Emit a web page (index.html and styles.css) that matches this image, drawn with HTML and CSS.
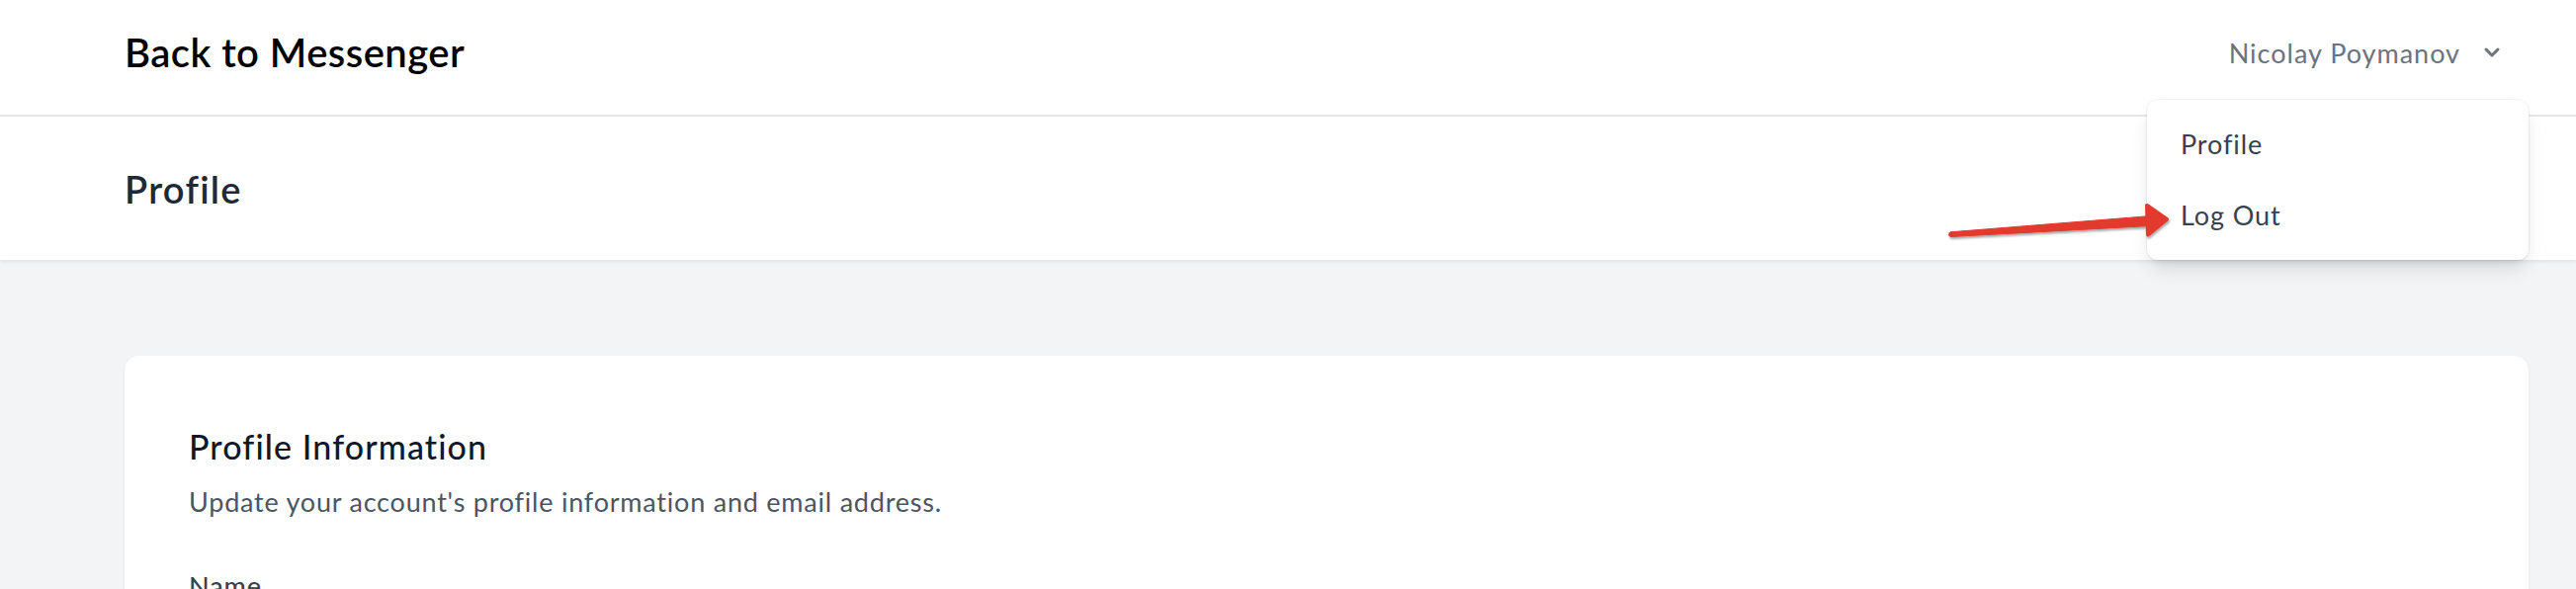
FILE: index.html
```html
<!DOCTYPE html>
<html lang="en">
<head>
<meta charset="utf-8">
<title>Profile</title>
<link rel="stylesheet" href="styles.css">
</head>
<body>
<nav class="nav">
  <div class="nav-inner">
    <a class="brand" href="#">Back to Messenger</a>
    <button class="user-btn" type="button">
      <span>Nicolay Poymanov</span>
      <svg class="chev" viewBox="0 0 20 20" fill="currentColor"><path fill-rule="evenodd" d="M5.293 7.293a1 1 0 011.414 0L10 10.586l3.293-3.293a1 1 0 111.414 1.414l-4 4a1 1 0 01-1.414 0l-4-4a1 1 0 010-1.414z" clip-rule="evenodd"/></svg>
    </button>
    <div class="dropdown">
      <a href="#">Profile</a>
      <a href="#">Log Out</a>
    </div>
  </div>
</nav>
<header class="header">
  <h1>Profile</h1>
</header>
<main class="main">
  <section class="card">
    <h2>Profile Information</h2>
    <p>Update your account's profile information and email address.</p>
    <div class="label">Name</div>
  </section>
</main>
<svg class="arrow" viewBox="1960 195 250 60" width="250" height="60">
  <defs>
    <filter id="sh" x="-10%" y="-30%" width="120%" height="160%">
      <feDropShadow dx="1" dy="2" stdDeviation="1" flood-color="#000" flood-opacity="0.35"/>
    </filter>
  </defs>
  <g filter="url(#sh)" fill="#e23a2f" stroke="#e23a2f" stroke-linejoin="round">
    <path d="M1973 234.8 L2176 218.5 L2176 228.5 L1973 239.6 Z" stroke-width="1"/>
    <circle cx="1973.5" cy="237.2" r="2.4" stroke="none"/>
    <path d="M2172 208 L2192 222 L2173 237.5 Z" stroke-width="4"/>
  </g>
</svg>
</body>
</html>
```
FILE: styles.css
```css
* { box-sizing: border-box; }
html, body { margin: 0; padding: 0; overflow: hidden; }
body {
  background: #f3f4f6;
  font-family: "Lato", "Liberation Sans", sans-serif;
  height: 596px;
  position: relative;
}
.nav {
  background: #fff;
  border-bottom: 2px solid #e5e7eb;
}
.nav-inner {
  position: relative;
  height: 116px;
  padding: 0 48px 10px 126px;
  display: flex;
  align-items: center;
  justify-content: space-between;
}
.brand {
  font-size: 40px;
  font-weight: 600;
  letter-spacing: 0.45px;
  color: #000;
  text-decoration: none;
}
.user-btn {
  display: flex;
  align-items: center;
  background: none;
  border: 0;
  padding: 0 22px 0 0;
  font-family: inherit;
  font-size: 27px;
  letter-spacing: 1px;
  color: #6b7280;
}
.chev {
  width: 30px;
  height: 30px;
  margin-left: 17px;
}
.dropdown {
  position: absolute;
  top: 101px;
  right: 48px;
  width: 386px;
  padding: 9px 0;
  background: #fff;
  border-radius: 11px;
  box-shadow: 0 0 0 1px rgba(0,0,0,0.05), 0 12px 20px -4px rgba(0,0,0,0.12), 0 6px 10px -6px rgba(0,0,0,0.1);
  z-index: 5;
}
.dropdown a {
  display: block;
  padding: 17px 34px;
  font-size: 27px;
  line-height: 38px;
  letter-spacing: 0.9px;
  color: #374151;
  text-decoration: none;
}
.header {
  background: #fff;
  height: 145px;
  padding-left: 126px;
  display: flex;
  align-items: center;
  box-shadow: 0 2px 4px rgba(0,0,0,0.07);
  position: relative;
  z-index: 1;
}
.header h1 {
  margin: 0;
  font-size: 38px;
  font-weight: 600;
  letter-spacing: 1.3px;
  color: #1f2937;
}
.main {
  padding: 97px 48px 0 126px;
}
.card {
  background: #fff;
  border-radius: 15px;
  padding: 65px;
  min-height: 400px;
  box-shadow: 0 2px 4px rgba(0,0,0,0.05);
}
.card h2 {
  margin: 0;
  font-size: 34px;
  line-height: 53px;
  font-weight: 500;
  letter-spacing: 1.1px;
  color: #111827;
}
.card p {
  margin: 11px 0 0;
  font-size: 27px;
  line-height: 38px;
  letter-spacing: 0.78px;
  color: #4b5563;
}
.label {
  margin-top: 47px;
  font-size: 27px;
  line-height: 38px;
  font-weight: 500;
  letter-spacing: 0.9px;
  color: #374151;
}
.arrow {
  position: absolute;
  left: 1960px;
  top: 195px;
  z-index: 10;
  overflow: visible;
}
```
